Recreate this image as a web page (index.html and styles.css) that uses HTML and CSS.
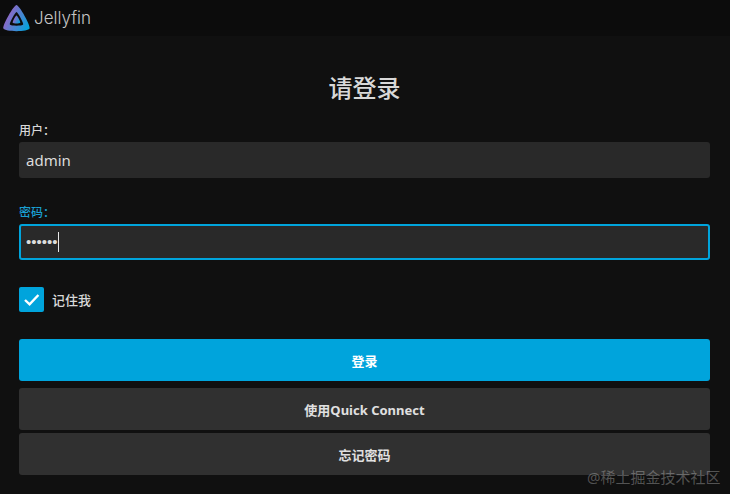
FILE: index.html
```html
<!DOCTYPE html>
<html lang="zh">
<head>
<meta charset="utf-8">
<title>Jellyfin</title>
<link rel="stylesheet" href="styles.css">
</head>
<body>
<header class="topbar">
  <svg class="logo" width="32" height="32" viewBox="0 0 32 32">
    <defs>
      <linearGradient id="lg" x1="0" y1="0.3" x2="1" y2="0.8">
        <stop offset="0" stop-color="#aa5cc3"/>
        <stop offset="1" stop-color="#00a4dc"/>
      </linearGradient>
    </defs>
    <path fill="url(#lg)" fill-rule="evenodd" d="M16.5 3C13.8 3 2.2 23.5 3.4 26.6 4.6 30 28.4 30 29.6 26.6 30.8 23.5 19.2 3 16.5 3ZM16.5 10C17.6 10 23.8 21 23.2 22.6 22.6 24.2 10.4 24.2 9.8 22.6 9.2 21 15.4 10 16.5 10Z"/>
    <path fill="url(#lg)" d="M16.5 13.4C15.7 13.4 12.3 19.8 12.7 20.8 13.1 21.8 19.9 21.8 20.3 20.8 20.7 19.8 17.3 13.4 16.5 13.4Z"/>
  </svg>
  <span class="brand">Jellyfin</span>
</header>
<main class="login">
  <h1 class="title">请登录</h1>
  <div class="field">
    <label class="label">用户：</label>
    <div class="input">admin</div>
  </div>
  <div class="field field-focus">
    <label class="label label-focus">密码：</label>
    <div class="input input-focus"><span class="dots">••••••</span><span class="caret"></span></div>
  </div>
  <div class="remember">
    <span class="checkbox">
      <svg width="25" height="25" viewBox="0 0 25 25"><path d="M6 13l4.6 4.4L19.4 8" fill="none" stroke="#fff" stroke-width="2.4"/></svg>
    </span>
    <span class="remember-text">记住我</span>
  </div>
  <div class="button primary">登录</div>
  <div class="button secondary first">使用Quick Connect</div>
  <div class="button secondary second">忘记密码</div>
</main>
<div class="watermark">@稀土掘金技术社区</div>
</body>
</html>
```
FILE: styles.css
```css
* { box-sizing: border-box; }
html, body { margin: 0; padding: 0; }
body {
  width: 730px;
  height: 494px;
  overflow: hidden;
  position: relative;
  background: #101010;
  color: #e0e0e0;
  font-family: "Noto Sans", "Noto Sans CJK SC", sans-serif;
}
.topbar {
  height: 36px;
  background: #0c0c0c;
  display: flex;
  align-items: center;
}
.logo { flex: none; }
.brand {
  margin-left: 2px;
  font-size: 17px;
  color: #c4c4c4;
  font-family: "Inter", "Noto Sans", sans-serif;
  font-weight: 300;
}
.login {
  padding: 0 20px 0 19px;
  display: flex;
  flex-direction: column;
}
.title {
  margin: 34px 0 0;
  height: 36px;
  line-height: 36px;
  text-align: center;
  font-size: 24px;
  font-weight: 500;
  color: #d8d8d8;
}
.field { margin-top: 14px; display: flex; flex-direction: column; }
.field-focus { margin-top: 24px; }
.label {
  height: 22px;
  line-height: 20px;
  font-size: 12px;
  font-weight: 500;
  color: #d8d8d8;
  font-family: "Noto Sans CJK TC", sans-serif;
}
.label-focus { color: #1a9fd2; }
.input {
  height: 36px;
  background: #292929;
  border-radius: 3px;
  padding-left: 7px;
  font-size: 15px;
  line-height: 36px;
  color: #dcdcdc;
  display: flex;
  align-items: center;
}
.input-focus {
  border: 2px solid #00a4dc;
  padding-left: 5px;
}
.dots {
  font-size: 15px;
  color: #dcdcdc;
  font-family: "Liberation Sans", sans-serif;
}
.caret {
  width: 1px;
  height: 20px;
  background: #e8e8e8;
}
.remember {
  margin-top: 26px;
  display: flex;
  align-items: center;
  height: 26px;
}
.checkbox {
  width: 25px;
  height: 25px;
  background: #00a4dc;
  border-radius: 2px;
  display: block;
}
.checkbox svg { display: block; }
.remember-text {
  margin-left: 8px;
  font-size: 13px;
  font-weight: 500;
  color: #d8d8d8;
}
.button {
  height: 42px;
  border-radius: 3px;
  display: flex;
  align-items: center;
  justify-content: center;
  font-size: 13px;
  font-weight: 700;
}
.primary { margin-top: 27px; background: #00a4dc; color: #fff; }
.secondary { background: #303030; color: #e0e0e0; }
.first { margin-top: 7px; }
.second { margin-top: 3px; }
.watermark {
  position: absolute;
  left: 587px;
  top: 467px;
  font-size: 15px;
  line-height: 20px;
  color: rgba(255, 255, 255, 0.28);
  white-space: nowrap;
}
```
